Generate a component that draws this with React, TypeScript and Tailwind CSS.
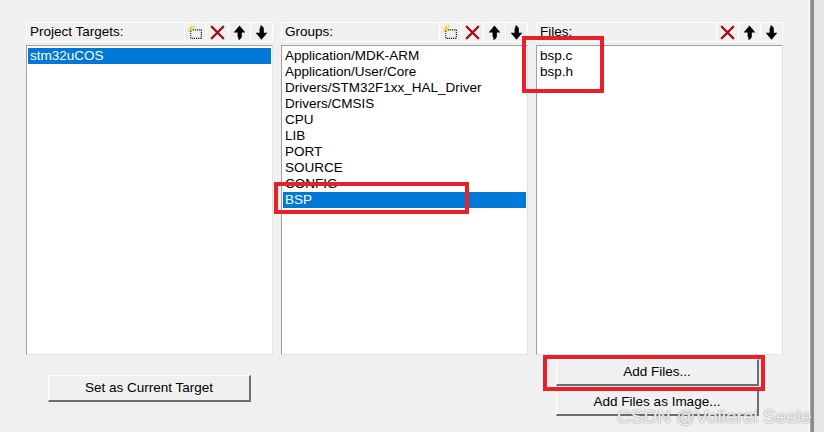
const NewIcon = () => (
  <svg width="17" height="17" viewBox="0 0 16 16">
    <rect x="3.5" y="5.5" width="10" height="8" fill="none" stroke="#000" strokeDasharray="1 1" />
    <path d="M4 1 L4.8 3.2 L7 4 L4.8 4.8 L4 7 L3.2 4.8 L1 4 L3.2 3.2 Z" fill="#f2d21a" />
    <path d="M7 1.5 L5.5 3 M1 7 L2.5 5.5" stroke="#e8c000" strokeWidth="1" />
  </svg>
);

const DeleteIcon = () => (
  <svg width="17" height="17" viewBox="0 0 16 16">
    <path d="M2 2 L14 14 M14 2 L2 14" stroke="#9b1111" strokeWidth="2" />
  </svg>
);

const UpIcon = () => (
  <svg width="17" height="17" viewBox="0 0 16 16">
    <path d="M8 1.5 L13.5 8 L10.2 8 L10.2 11 C10.2 12.6 9.6 13.6 8 14.8 L6.8 14.8 C7.4 13.6 6.9 12.6 6.2 12 L6.2 8 L2.5 8 Z" fill="#000" />
  </svg>
);

const DownIcon = () => (
  <svg width="17" height="17" viewBox="0 0 16 16">
    <path d="M8 14.8 L13.5 8.3 L10.2 8.3 L10.2 5.3 C10.2 3.7 9.6 2.7 8 1.5 L6.8 1.5 C7.4 2.7 6.9 3.7 6.2 4.3 L6.2 8.3 L2.5 8.3 Z" fill="#000" />
  </svg>
);

const ToolBtn = ({ children }: { children: React.ReactNode }) => (
  <div className="w-[22px] h-full flex items-center justify-center border-l border-white">
    {children}
  </div>
);

type PanelProps = {
  title: string;
  items: string[];
  selected?: number;
  showNew?: boolean;
  children?: React.ReactNode;
};

const Panel = ({ title, items, selected, showNew = true, children }: PanelProps) => (
  <div className="w-[247px] flex flex-col">
    <div className="h-[20px] flex items-stretch border border-white">
      <span className="pl-[3px] self-center text-black">{title}</span>
      <div className="ml-auto flex items-stretch">
        {showNew && (
          <ToolBtn>
            <NewIcon />
          </ToolBtn>
        )}
        <ToolBtn>
          <DeleteIcon />
        </ToolBtn>
        <ToolBtn>
          <UpIcon />
        </ToolBtn>
        <ToolBtn>
          <DownIcon />
        </ToolBtn>
      </div>
    </div>
    <div className="mt-[3px] h-[310px] bg-white border border-t-[#a0a0a0] border-l-[#a0a0a0] border-b-[#e3e3e3] border-r-[#e3e3e3] pt-[2px] px-px">
      {items.map((item, i) => (
        <div
          key={item}
          className={
            i === selected
              ? "h-[16px] leading-[16px] pl-[2px] bg-[#0078d7] text-white"
              : "h-[16px] leading-[16px] pl-[2px] text-black"
          }
        >
          {item}
        </div>
      ))}
    </div>
    {children}
  </div>
);

const WinButton = ({ label, className }: { label: string; className: string }) => (
  <div
    className={`${className} flex items-center justify-center bg-[#f0f0f0] border-t border-l border-white border-b-2 border-r-2 border-b-[#6d6d6d] border-r-[#6d6d6d] text-black`}
  >
    {label}
  </div>
);

export default function App() {
  return (
    <div className="w-[824px] h-[432px] bg-[#f0f0f0] relative overflow-hidden flex font-['Liberation_Sans',Arial,sans-serif] text-[13.5px]">
      <div className="w-[809px] pl-[26px] pt-[22px] flex gap-2">
        <Panel title="Project Targets:" items={["stm32uCOS"]} selected={0}>
          <WinButton label="Set as Current Target" className="mt-[20px] ml-[22px] w-[203px] h-[27px]" />
        </Panel>
        <Panel
          title="Groups:"
          items={[
            "Application/MDK-ARM",
            "Application/User/Core",
            "Drivers/STM32F1xx_HAL_Driver",
            "Drivers/CMSIS",
            "CPU",
            "LIB",
            "PORT",
            "SOURCE",
            "CONFIG",
            "BSP",
          ]}
          selected={9}
        />
        <Panel title="Files:" items={["bsp.c", "bsp.h"]} showNew={false}>
          <WinButton label="Add Files..." className="mt-[4px] ml-[20px] w-[203px] h-[27px]" />
          <WinButton label="Add Files as Image..." className="mt-[3px] ml-[20px] w-[203px] h-[27px]" />
        </Panel>
      </div>
      <div className="w-px bg-white" />
      <div className="w-px bg-[#a0a0a0]" />
      <div className="w-[3px] bg-[#8c8c8c]" />
      <div className="flex-1 bg-[#e6e6e6]" />

      {/* red annotation boxes */}
      <div className="absolute left-[522px] top-[36px] w-[82px] h-[57px] border-4 border-[#e8202a]" />
      <div className="absolute left-[274px] top-[182px] w-[195px] h-[32px] border-4 border-[#e8202a]" />
      <div className="absolute left-[543px] top-[355px] w-[222px] h-[36px] border-4 border-[#e8202a]" />

      {/* watermark */}
      <div className="absolute left-[617px] top-[403px] text-[19px] text-[#f2f2f2] [text-shadow:0_0_1.5px_#6a6a6a] whitespace-nowrap">
        CSDN @Vollerei Seele
      </div>
    </div>
  );
}
